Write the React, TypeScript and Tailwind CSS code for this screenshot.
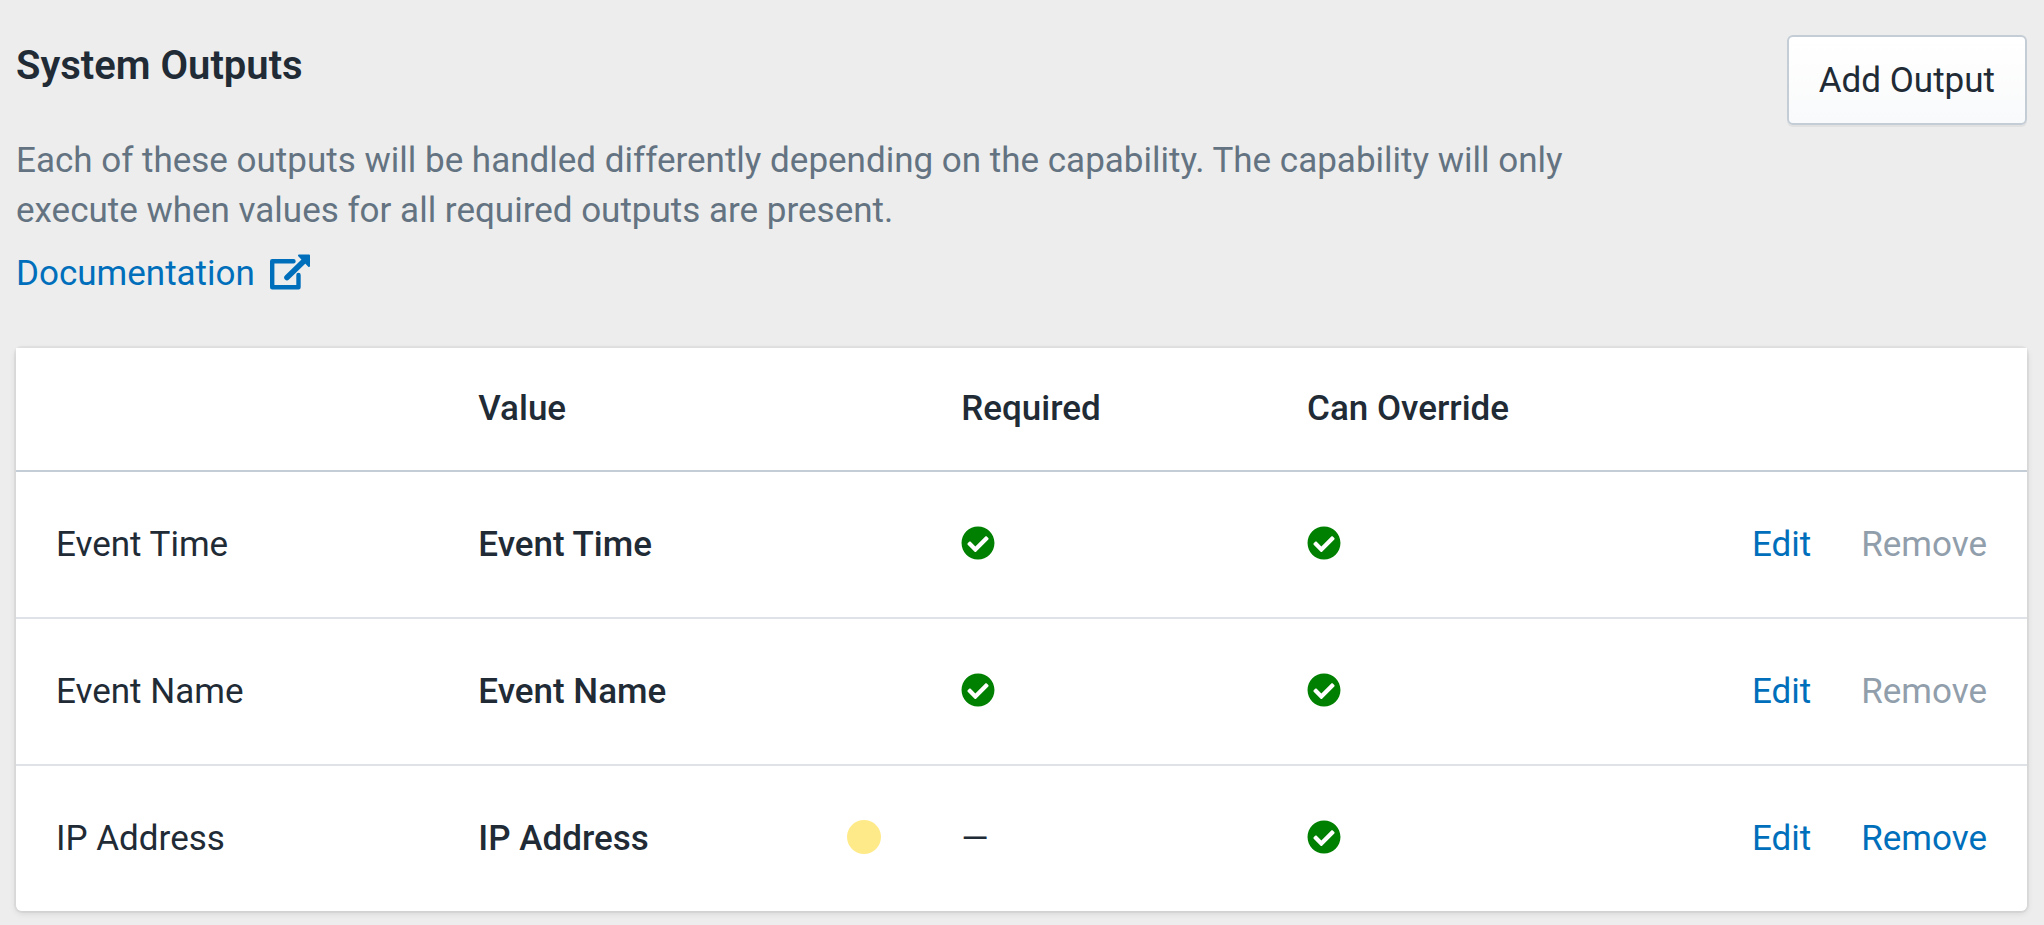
import React from "react";
import { FaCheckCircle } from "react-icons/fa";

const outputs = [
  { name: "Event Time", value: "Event Time", required: true, canOverride: true, removable: false, flagged: false },
  { name: "Event Name", value: "Event Name", required: true, canOverride: true, removable: false, flagged: false },
  { name: "IP Address", value: "IP Address", required: false, canOverride: true, removable: true, flagged: true },
];

const Flag = ({ on }: { on: boolean }) =>
  on ? (
    <FaCheckCircle className="mb-1 h-[34px] w-[34px] text-[#008000]" role="img" aria-label="Yes" />
  ) : (
    <span>—</span>
  );

const SystemOutputs = () => {
  return (
    <div className="min-h-screen bg-[#ededed] pt-[35px] pr-[17px] pb-[14px] pl-4 font-['Roboto',sans-serif] text-[35px] leading-[50px] text-[#212b36]">
      {/* Page Header */}
      <div className="flex items-start justify-between">
        <div>
          <h1 className="pt-[5px] pb-1 text-[40px] leading-[52px] font-semibold">System Outputs</h1>
          <p className="mt-10 max-w-[1600px] text-[#637381]">
            Each of these outputs will be handled differently depending on the capability. The capability will only execute when values for all required outputs are present.
          </p>
          <a href="#" className="mt-[13px] inline-flex items-center gap-[15px] text-[#006fbb]">
            Documentation
            <svg className="mb-1 h-9 w-10" viewBox="0 0 40 36" fill="none" stroke="currentColor" strokeWidth="4.4" strokeLinecap="round" strokeLinejoin="round" aria-hidden="true">
              <path d="M23.500 7.200H2.200v26h26.300V21" />
              <path strokeWidth="5.6" d="M17 23.500 34 7" />
              <path strokeWidth="2" fill="currentColor" d="M29 1.500h10V12Z" />
            </svg>
          </a>
        </div>
        <button className="h-[90px] shrink-0 rounded-md border-2 border-[#c4cdd5] bg-linear-to-b from-white to-[#f9fafb] px-[30px] pt-[2px] shadow-[0_2px_0_rgba(22,29,37,0.05)]">
          Add Output
        </button>
      </div>

      {/* Outputs Table */}
      <div className="mt-[49px] rounded-md shadow-[0_0_0_2px_rgba(63,63,68,0.05),0_2px_6px_rgba(63,63,68,0.15)]">
        <div className="overflow-hidden rounded-b-md bg-white">
          <table className="w-full table-fixed text-left">
            <thead>
              <tr className="h-[123px] border-b-2 border-[#c4cdd5]">
                <th className="w-[21%]" aria-label="Output" />
                <th className="w-[26%] pl-10 font-medium">Value</th>
                <th className="w-[17.2%] font-medium">Required</th>
                <th className="w-[17.2%] font-medium">Can Override</th>
                <th aria-label="Actions" />
              </tr>
            </thead>
            <tbody className="divide-y-2 divide-[#dfe3e8]">
              {outputs.map((output) => (
                <tr key={output.name} className="h-[147px] last:h-[146px]">
                  <td className="pl-10">{output.name}</td>
                  <td className="pl-10 font-medium">
                    <div className="flex items-center justify-between pr-20">
                      {output.value}
                      {output.flagged && <span className="mb-1 h-[34px] w-[34px] rounded-full bg-[#ffea8a]" />}
                    </div>
                  </td>
                  <td><Flag on={output.required} /></td>
                  <td><Flag on={output.canOverride} /></td>
                  <td className="pr-10">
                    <div className="flex justify-end gap-[50px] text-[#006fbb]">
                      <button>Edit</button>
                      <button disabled={!output.removable} className="disabled:text-[#919eab]">Remove</button>
                    </div>
                  </td>
                </tr>
              ))}
            </tbody>
          </table>
        </div>
      </div>
    </div>
  );
};

export default SystemOutputs;
